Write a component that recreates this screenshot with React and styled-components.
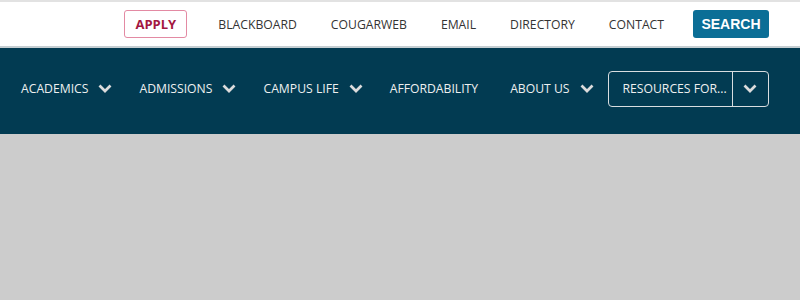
import React from 'react';
import styled, { createGlobalStyle } from 'styled-components';

const Global = createGlobalStyle`
	body {
		margin: 0;
		background: #cccccc;
		font-family: 'Open Sans', 'Liberation Sans', sans-serif;
	}
`;

const TopBar = styled.div`
	display: flex;
	align-items: center;
	justify-content: flex-end;
	height: 44px;
	padding-right: 31px;
	background: #fff;
	border-top: 2px solid #e2e2e2;
	border-bottom: 2px solid #c5ced2;
`;

const ApplyButton = styled.a`
	display: flex;
	align-items: center;
	justify-content: center;
	box-sizing: border-box;
	width: 63px;
	height: 28px;
	margin-right: 31px;
	border: 1px solid #e38aa3;
	border-radius: 3px;
	color: #a3173f;
	font-size: 13px;
	font-weight: 700;
`;

const TopLink = styled.a`
	margin-right: ${(p) => p.$space || 34}px;
	color: #333;
	font-size: 12.2px;
	text-transform: uppercase;
	white-space: nowrap;
`;

const SearchButton = styled.a`
	display: flex;
	align-items: center;
	justify-content: center;
	width: 76px;
	height: 28px;
	border-radius: 3px;
	background: #0b6e96;
	color: #fff;
	font-family: 'Liberation Sans', Arial, sans-serif;
	font-size: 14px;
	font-weight: 700;
`;

const MainNav = styled.nav`
	display: flex;
	align-items: center;
	box-sizing: border-box;
	height: 86px;
	padding: 0 0 5px 21px;
	background: #023b52;
`;

const NavItem = styled.a`
	display: flex;
	align-items: center;
	gap: 10px;
	margin-right: ${(p) => p.$space || 27}px;
	color: #eef0f0;
	font-size: 12.2px;
	text-transform: uppercase;
	white-space: nowrap;
`;

const Resources = styled.div`
	display: flex;
	align-items: stretch;
	box-sizing: border-box;
	width: 161px;
	height: 36px;
	border: 1px solid #d8dde0;
	border-radius: 4px;
	color: #eef0f0;
	font-size: 12.2px;
	white-space: nowrap;
`;

const ResourcesLabel = styled.span`
	display: flex;
	align-items: center;
	flex: 1;
	padding-left: 14px;
	border-right: 1px solid #d8dde0;
`;

const ResourcesToggle = styled.span`
	display: flex;
	align-items: center;
	justify-content: center;
	width: 35px;
`;

const Chevron = () => (
	<svg width="14" height="9" viewBox="0 0 14 9">
		<polyline points="1.5,1.5 7,7 12.5,1.5" fill="none" stroke="#dcdcdc" strokeWidth="2.7" />
	</svg>
);

const App = () => {
	return (
		<>
			<Global />
			<TopBar>
				<ApplyButton>APPLY</ApplyButton>
				<TopLink>Blackboard</TopLink>
				<TopLink>Cougarweb</TopLink>
				<TopLink>Email</TopLink>
				<TopLink>Directory</TopLink>
				<TopLink $space={29}>Contact</TopLink>
				<SearchButton>SEARCH</SearchButton>
			</TopBar>
			<MainNav>
				<NavItem>Academics <Chevron /></NavItem>
				<NavItem>Admissions <Chevron /></NavItem>
				<NavItem>Campus Life <Chevron /></NavItem>
				<NavItem $space={32}>Affordability</NavItem>
				<NavItem $space={14}>About Us <Chevron /></NavItem>
				<Resources>
					<ResourcesLabel>RESOURCES FOR...</ResourcesLabel>
					<ResourcesToggle><Chevron /></ResourcesToggle>
				</Resources>
			</MainNav>
		</>
	);
};

export default App;
